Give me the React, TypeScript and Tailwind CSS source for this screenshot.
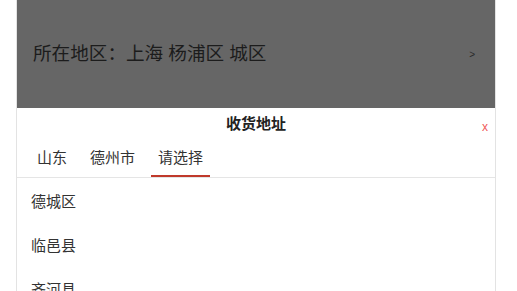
import React from 'react';

const FONT = '"Liberation Sans", "Noto Sans CJK SC", sans-serif';

const TABS = ['山东', '德州市', '请选择'];
const AREAS = ['德城区', '临邑县', '齐河县', '平原县'];

export default function App() {
  const active = 2;
  return (
    <div className="h-[291px] w-[517px] overflow-hidden bg-white" style={{ fontFamily: FONT }}>
      <div className="ml-[16px] h-full w-[480px] border-x border-[#e3e3e3]">
        {/* 地区行 (被遮罩盖住) */}
        <div className="flex h-[108px] items-center justify-between bg-[#666666] pl-[16px] pr-[20px]">
          <span className="text-[18.6px] text-[#1c1c1c]">所在地区：上海 杨浦区 城区</span>
          <span className="text-[10px] text-[#2a2a2a]">&gt;</span>
        </div>

        {/* 收货地址面板 */}
        <div className="bg-white">
          <div className="relative flex h-[32px] items-center justify-center">
            <span className="text-[15px] font-bold text-[#222]">收货地址</span>
            <span className="absolute right-[7px] top-[13px] text-[12px] leading-none text-[#f05a5a]">x</span>
          </div>
          <div className="flex h-[38px] gap-[9px] border-b border-[#e5e5e5] pl-[13px]">
            {TABS.map((t, i) => (
              <div
                key={t}
                className={`flex items-center px-[7px] pt-[2px] text-[15px] text-[#333] ${
                  i === active ? 'border-b-2 border-[#c0392b]' : 'border-b-2 border-transparent'
                }`}
              >
                {t}
              </div>
            ))}
          </div>
          <div className="pl-[14px] pt-[2px]">
            {AREAS.map((a) => (
              <div key={a} className="flex h-[44px] items-center text-[15px] text-[#333]">
                {a}
              </div>
            ))}
          </div>
        </div>
      </div>
    </div>
  );
}
